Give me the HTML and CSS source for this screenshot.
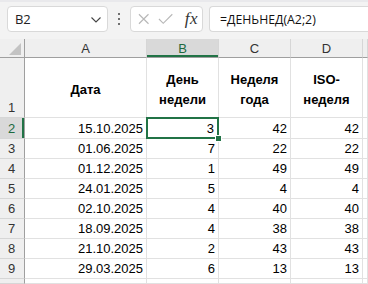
FILE: index.html
```html
<!DOCTYPE html>
<html>
<head>
<meta charset="utf-8">
<link rel="stylesheet" href="styles.css">
</head>
<body>
<div class="topbar">
  <div class="namebox">
    <span class="nb-text">B2</span>
    <svg class="chev" width="10" height="6" viewBox="0 0 10 6"><polyline points="0.5,0.5 5,5 9.5,0.5" fill="none" stroke="#444" stroke-width="1.1"/></svg>
  </div>
  <div class="dots"><i></i><i></i><i></i></div>
  <div class="btnbox">
    <svg width="12" height="12" viewBox="0 0 12 12"><path d="M1 1 L11 11 M11 1 L1 11" stroke="#b8b8b8" stroke-width="1.2"/></svg>
    <svg width="16" height="12" viewBox="0 0 16 12"><polyline points="1,6 5.5,10.5 15,1" fill="none" stroke="#b8b8b8" stroke-width="1.2"/></svg>
    <span class="fx">fx</span>
  </div>
  <div class="formula">=ДЕНЬНЕД(A2;2)</div>
</div>
<div class="sheet">
  <div class="corner"><span class="tri"></span></div>
  <div class="h">A</div>
  <div class="h sel">B</div>
  <div class="h">C</div>
  <div class="h">D</div>
  <div class="h"></div>

  <div class="rh bottom">1</div>
  <div class="c head">Дата</div>
  <div class="c head">День<br>недели</div>
  <div class="c head">Неделя<br>года</div>
  <div class="c head">ISO-<br>неделя</div>
  <div class="c"></div>

  <div class="rh rsel">2</div>
  <div class="c">15.10.2025</div>
  <div class="c active">3<span class="handle"></span></div>
  <div class="c">42</div>
  <div class="c">42</div>
  <div class="c"></div>

  <div class="rh">3</div>
  <div class="c">01.06.2025</div>
  <div class="c">7</div>
  <div class="c">22</div>
  <div class="c">22</div>
  <div class="c"></div>

  <div class="rh">4</div>
  <div class="c">01.12.2025</div>
  <div class="c">1</div>
  <div class="c">49</div>
  <div class="c">49</div>
  <div class="c"></div>

  <div class="rh">5</div>
  <div class="c">24.01.2025</div>
  <div class="c">5</div>
  <div class="c">4</div>
  <div class="c">4</div>
  <div class="c"></div>

  <div class="rh">6</div>
  <div class="c">02.10.2025</div>
  <div class="c">4</div>
  <div class="c">40</div>
  <div class="c">40</div>
  <div class="c"></div>

  <div class="rh">7</div>
  <div class="c">18.09.2025</div>
  <div class="c">4</div>
  <div class="c">38</div>
  <div class="c">38</div>
  <div class="c"></div>

  <div class="rh">8</div>
  <div class="c">21.10.2025</div>
  <div class="c">2</div>
  <div class="c">43</div>
  <div class="c">43</div>
  <div class="c"></div>

  <div class="rh">9</div>
  <div class="c">29.03.2025</div>
  <div class="c">6</div>
  <div class="c">13</div>
  <div class="c">13</div>
  <div class="c"></div>

  <div class="rh"></div>
  <div class="c"></div>
  <div class="c"></div>
  <div class="c"></div>
  <div class="c"></div>
  <div class="c"></div>
</div>
</body>
</html>
```

FILE: styles.css
```css
html, body {
  margin: 0;
  padding: 0;
  background: #fff;
  overflow: hidden;
  width: 368px;
  height: 284px;
}
body {
  font-family: "Liberation Sans", Arial, sans-serif;
  font-size: 13px;
  color: #000;
}
.topbar {
  height: 39px;
  box-sizing: border-box;
  background: #f3f3f3;
  border-top: 2px solid #e9e9ec;
  display: flex;
  align-items: flex-start;
  padding: 4px 0 0 7px;
}
.namebox {
  width: 101px;
  height: 26px;
  box-sizing: border-box;
  background: #fff;
  border: 1px solid #d9d9d9;
  border-radius: 4px;
  display: flex;
  align-items: center;
  justify-content: space-between;
  padding: 0 6px 0 7px;
  font-family: "Open Sans", sans-serif;
  font-size: 13px;
  color: #222;
}
.nb-text { letter-spacing: -0.2px; }
.chev { margin-top: 1px; }
.dots {
  width: 22px;
  height: 26px;
  display: flex;
  flex-direction: column;
  align-items: center;
  justify-content: center;
  gap: 2.5px;
}
.dots i {
  display: block;
  width: 2.5px;
  height: 2.5px;
  border-radius: 50%;
  background: #444;
}
.btnbox {
  width: 73px;
  height: 26px;
  box-sizing: border-box;
  background: #fff;
  border: 1px solid #d9d9d9;
  border-radius: 4px;
  display: flex;
  align-items: center;
  padding: 0 4px 0 7px;
  gap: 9px;
}
.fx {
  font-family: "Liberation Serif", "DejaVu Serif", serif;
  font-style: italic;
  font-size: 17px;
  color: #333;
  margin-left: 2px;
  letter-spacing: 0.5px;
}
.formula {
  flex: 1;
  margin-left: 6px;
  height: 26px;
  box-sizing: border-box;
  background: #fff;
  border: 1px solid #d9d9d9;
  border-right: none;
  border-radius: 4px 0 0 4px;
  display: flex;
  align-items: center;
  padding-left: 10px;
  font-family: "Open Sans", sans-serif;
  font-size: 12.3px;
  color: #111;
}
.sheet {
  display: grid;
  grid-template-columns: 25px 122px 72px 72px 72px 5px;
  grid-template-rows: 19px 60px 21px repeat(7, 20px) 5px;
  overflow: hidden;
}
.sheet > div {
  box-sizing: border-box;
  position: relative;
}
.corner {
  background: #efefef;
  border-right: 1px solid #9f9f9f;
  border-bottom: 1px solid #9f9f9f;
}
.tri {
  position: absolute;
  right: 3px;
  bottom: 2px;
  width: 0;
  height: 0;
  border-left: 12px solid transparent;
  border-bottom: 12px solid #c3c3c3;
}
.h {
  background: #efefef;
  border-right: 1px solid #d6d6d6;
  border-bottom: 1px solid #9f9f9f;
  display: flex;
  align-items: center;
  justify-content: center;
  color: #333;
  font-size: 13px;
  padding-top: 1px;
}
.h.sel {
  background: #d9d9d9;
  color: #1d6a3f;
  box-shadow: inset 0 -2px 0 #217346;
}
.rh {
  background: #efefef;
  border-right: 1px solid #9f9f9f;
  border-bottom: 1px solid #d6d6d6;
  display: flex;
  align-items: flex-end;
  justify-content: center;
  color: #333;
  font-size: 13px;
  padding-bottom: 2px;
  padding-right: 1px;
}
.rh.rsel {
  background: #d9d9d9;
  color: #1d6a3f;
  box-shadow: inset -2px 0 0 #217346;
}
.c {
  border-right: 1px solid #e1e1e1;
  border-bottom: 1px solid #e1e1e1;
  display: flex;
  align-items: flex-end;
  justify-content: flex-end;
  padding: 0 3px 2px 0;
  white-space: nowrap;
}
.c.head {
  align-items: center;
  justify-content: center;
  text-align: center;
  font-weight: bold;
  line-height: 20px;
  padding: 5px 0 0 0;
}
.c.active {
  padding-right: 4px;
}
.c.active::after {
  content: "";
  position: absolute;
  top: -1px;
  left: -1px;
  right: -1px;
  bottom: -1px;
  border: 2px solid #217346;
}
.handle {
  position: absolute;
  right: -4px;
  bottom: -4px;
  width: 5px;
  height: 5px;
  background: #217346;
  border: 1px solid #fff;
  z-index: 2;
}
```
